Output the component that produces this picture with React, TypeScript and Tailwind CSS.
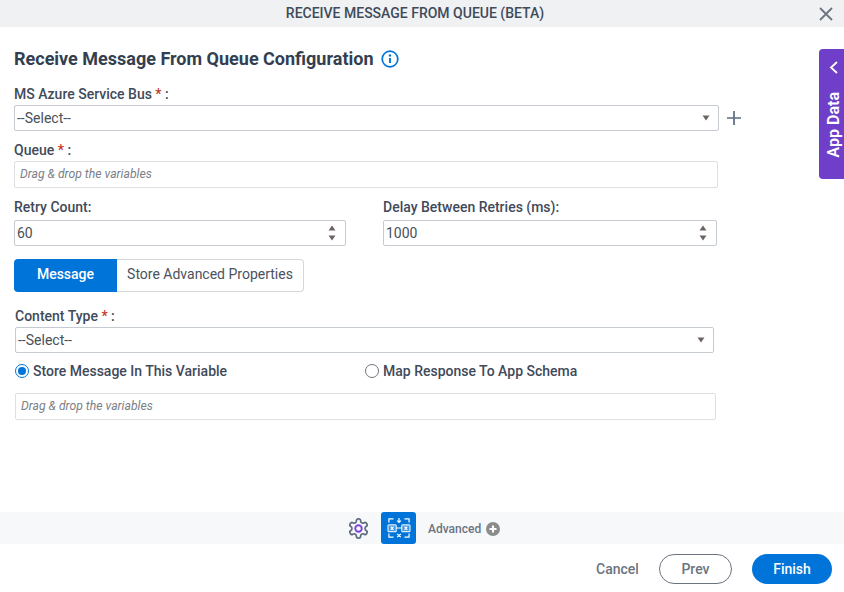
import React from "react";

const labelCls = "text-[14px] leading-[16px] font-medium text-[#3f4a5a]";

function Req() {
  return <span className="text-[#c0392b]">*</span>;
}

function Arrow() {
  return (
    <svg width="8" height="6" viewBox="0 0 8 6" className="shrink-0">
      <path d="M0.5 0.5h7L4 5.5z" fill="#6d6462" />
    </svg>
  );
}

function SelectBox({ width }: { width: string }) {
  return (
    <div className={`${width} h-[26px] rounded-[2px] border border-[#c6cad1] bg-white flex items-center justify-between pl-[2px] pr-[8px] text-[14px] text-[#4a4f57]`}>
      <span>--Select--</span>
      <Arrow />
    </div>
  );
}

function DropInput({ width }: { width: string }) {
  return (
    <div className={`${width} h-[27px] rounded-[2px] border border-[#dcdfe3] bg-white flex items-center pl-[5px] text-[12.2px] italic text-[#7a7f87]`}>
      Drag &amp; drop the variables
    </div>
  );
}

function NumberBox({ width, value }: { width: string; value: string }) {
  return (
    <div className={`${width} h-[26px] rounded-[2px] border border-[#c6cad1] bg-white flex items-center justify-between pl-[2px] pr-[9px] text-[14px] text-[#4a4f57]`}>
      <span>{value}</span>
      <span className="flex flex-col gap-[4px]">
        <svg width="8" height="6" viewBox="0 0 8 6"><path d="M0.5 5.5h7L4 0.5z" fill="#6d6462" /></svg>
        <svg width="8" height="6" viewBox="0 0 8 6"><path d="M0.5 0.5h7L4 5.5z" fill="#6d6462" /></svg>
      </span>
    </div>
  );
}

export default function App() {
  return (
    <div className="w-[844px] h-[592px] bg-white flex flex-col overflow-hidden font-['Roboto',sans-serif]">
      <header className="relative h-[27px] shrink-0 bg-[#f0f1f3] flex items-center justify-center pr-[14px] text-[14px] font-medium text-[#3f4a5a]">
        RECEIVE MESSAGE FROM QUEUE (BETA)
        <svg className="absolute right-[11px] top-[7px]" width="14" height="14" viewBox="0 0 14 14">
          <path d="M1 1l12 12M13 1L1 13" stroke="#6b7480" strokeWidth="1.8" />
        </svg>
      </header>

      <main className="relative flex-1 pl-[14px] flex flex-col">
        <div className="absolute right-0 top-[22px] w-[25px] h-[130px] bg-[#6f3fc9] rounded-l-[4px] flex flex-col items-center pl-[4px] text-white">
          <svg className="mt-[12px]" width="9" height="13" viewBox="0 0 9 13">
            <path d="M8 1L2 6.5 8 12" fill="none" stroke="#fff" strokeWidth="1.8" />
          </svg>
          <span className="mt-[18px] text-[16px] leading-[21px] font-semibold [writing-mode:vertical-rl] rotate-180">App Data</span>
        </div>

        <div className="mt-[20px] flex items-center h-[24px]">
          <h1 className="text-[18px] leading-[24px] font-bold text-[#333f50]">Receive Message From Queue Configuration</h1>
          <svg className="ml-[8px]" width="18" height="18" viewBox="0 0 18 18">
            <circle cx="9" cy="9" r="7.8" fill="none" stroke="#0074d9" strokeWidth="1.7" />
            <path d="M9 8v5" stroke="#0074d9" strokeWidth="1.9" />
            <circle cx="9" cy="5.5" r="1.2" fill="#0074d9" />
          </svg>
        </div>

        <div className={`${labelCls} mt-[15px]`}>MS Azure Service Bus <Req /> :</div>
        <div className="mt-[3px] flex items-center">
          <SelectBox width="w-[705px]" />
          <svg className="ml-[8px]" width="14" height="14" viewBox="0 0 14 14">
            <path d="M7 0v14M0 7h14" stroke="#5c6b80" strokeWidth="1.7" />
          </svg>
        </div>

        <div className={`${labelCls} mt-[11px]`}>Queue <Req /> :</div>
        <div className="mt-[3px]"><DropInput width="w-[704px]" /></div>

        <div className="mt-[11px] flex">
          <div className="w-[369px]">
            <div className={labelCls}>Retry Count:</div>
            <div className="mt-[5px]"><NumberBox width="w-[332px]" value="60" /></div>
          </div>
          <div>
            <div className={labelCls}>Delay Between Retries (ms):</div>
            <div className="mt-[5px]"><NumberBox width="w-[334px]" value="1000" /></div>
          </div>
        </div>

        <div className="mt-[13px] flex w-[290px] h-[33px] text-[14px]">
          <div className="w-[103px] bg-[#0074d9] rounded-l-[4px] pb-[2px] text-white font-medium flex items-center justify-center">Message</div>
          <div className="flex-1 border border-l-0 border-[#d4d7dc] rounded-r-[4px] pb-[2px] text-[#4a5260] flex items-center justify-center">Store Advanced Properties</div>
        </div>

        <div className="pl-[1px] flex flex-col">
          <div className={`${labelCls} mt-[16px]`}>Content Type <Req /> :</div>
          <div className="mt-[3px]"><SelectBox width="w-[699px]" /></div>

          <div className="mt-[10px] flex h-[16px] items-center">
            <div className="w-[350px] flex items-center">
              <span className="w-[14px] h-[14px] rounded-full border border-[#0074d9] flex items-center justify-center mr-[4px]">
                <span className="w-[8px] h-[8px] rounded-full bg-[#0074d9]" />
              </span>
              <span className={labelCls}>Store Message In This Variable</span>
            </div>
            <div className="flex items-center">
              <span className="w-[14px] h-[14px] rounded-full border border-[#6f7680] mr-[4px]" />
              <span className={`${labelCls} w-[194px] overflow-hidden whitespace-nowrap`}>Map Response To App Schema</span>
            </div>
          </div>

          <div className="mt-[14px]"><DropInput width="w-[701px]" /></div>
        </div>
      </main>

      <div className="h-[32px] shrink-0 bg-[#f7f8fa] flex items-center">
        <svg className="ml-[347px]" width="23" height="23" viewBox="0 0 24 24" fill="none">
          <path d="M12.22 2h-.44a2 2 0 0 0-2 2v.18a2 2 0 0 1-1 1.73l-.43.25a2 2 0 0 1-2 0l-.15-.08a2 2 0 0 0-2.73.73l-.22.38a2 2 0 0 0 .73 2.73l.15.1a2 2 0 0 1 1 1.72v.51a2 2 0 0 1-1 1.74l-.15.09a2 2 0 0 0-.73 2.73l.22.38a2 2 0 0 0 2.73.73l.15-.08a2 2 0 0 1 2 0l.43.25a2 2 0 0 1 1 1.73V20a2 2 0 0 0 2 2h.44a2 2 0 0 0 2-2v-.18a2 2 0 0 1 1-1.73l.43-.25a2 2 0 0 1 2 0l.15.08a2 2 0 0 0 2.73-.73l.22-.39a2 2 0 0 0-.73-2.73l-.15-.08a2 2 0 0 1-1-1.74v-.5a2 2 0 0 1 1-1.74l.15-.09a2 2 0 0 0 .73-2.73l-.22-.38a2 2 0 0 0-2.73-.73l-.15.08a2 2 0 0 1-2 0l-.43-.25a2 2 0 0 1-1-1.73V4a2 2 0 0 0-2-2z" stroke="#626e80" strokeWidth="1.8" strokeLinejoin="round" />
          <circle cx="12" cy="12" r="3.4" stroke="#7a45d6" strokeWidth="2" />
        </svg>
        <div className="ml-[11px] w-[35px] h-[32px] bg-[#0074d9] rounded-[3px] flex items-center justify-center">
          <svg width="24" height="22" viewBox="0 0 26 24" fill="none" stroke="#fff" strokeWidth="1.3">
            <path d="M2 6V2h5M19 2h5v4M2 18v4h5M19 22h5v-4" />
            <rect x="1" y="8.5" width="9" height="7.5" rx="1" fill="#cfe4f8" fillOpacity=".3" stroke="#dcecfb" />
            <rect x="16" y="8.5" width="9" height="7.5" rx="1" fill="#cfe4f8" fillOpacity=".3" stroke="#dcecfb" />
            <path d="M10 12h6M13 1v5M11 4l2 2 2-2M11 18.5l4 3.5M15 18.5l-4 3.5M4 10.5l3 3.5M7 10.5l-3 3.5M19 10.5l3 3.5M22 10.5l-3 3.5" />
          </svg>
        </div>
        <span className="ml-[12px] mt-[1px] text-[12px] font-medium text-[#6b7480]">Advanced</span>
        <svg className="ml-[5px] mt-[1px]" width="14" height="14" viewBox="0 0 14 14">
          <circle cx="7" cy="7" r="7" fill="#8c8c8c" />
          <path d="M7 3.5v7M3.5 7h7" stroke="#fff" strokeWidth="2" />
        </svg>
      </div>

      <footer className="h-[48px] shrink-0 flex items-start justify-end pt-[10px] pr-[12px] text-[14px] font-medium">
        <span className="w-[42px] h-[30px] flex items-center overflow-hidden text-[#6b7480] mr-[21px]">Cancel</span>
        <span className="w-[73px] h-[30px] rounded-full border border-[#6b7480] text-[#6b7480] flex items-center justify-center mr-[20px]">Prev</span>
        <span className="w-[80px] h-[30px] rounded-full bg-[#0074d9] text-white flex items-center justify-center">Finish</span>
      </footer>
    </div>
  );
}
